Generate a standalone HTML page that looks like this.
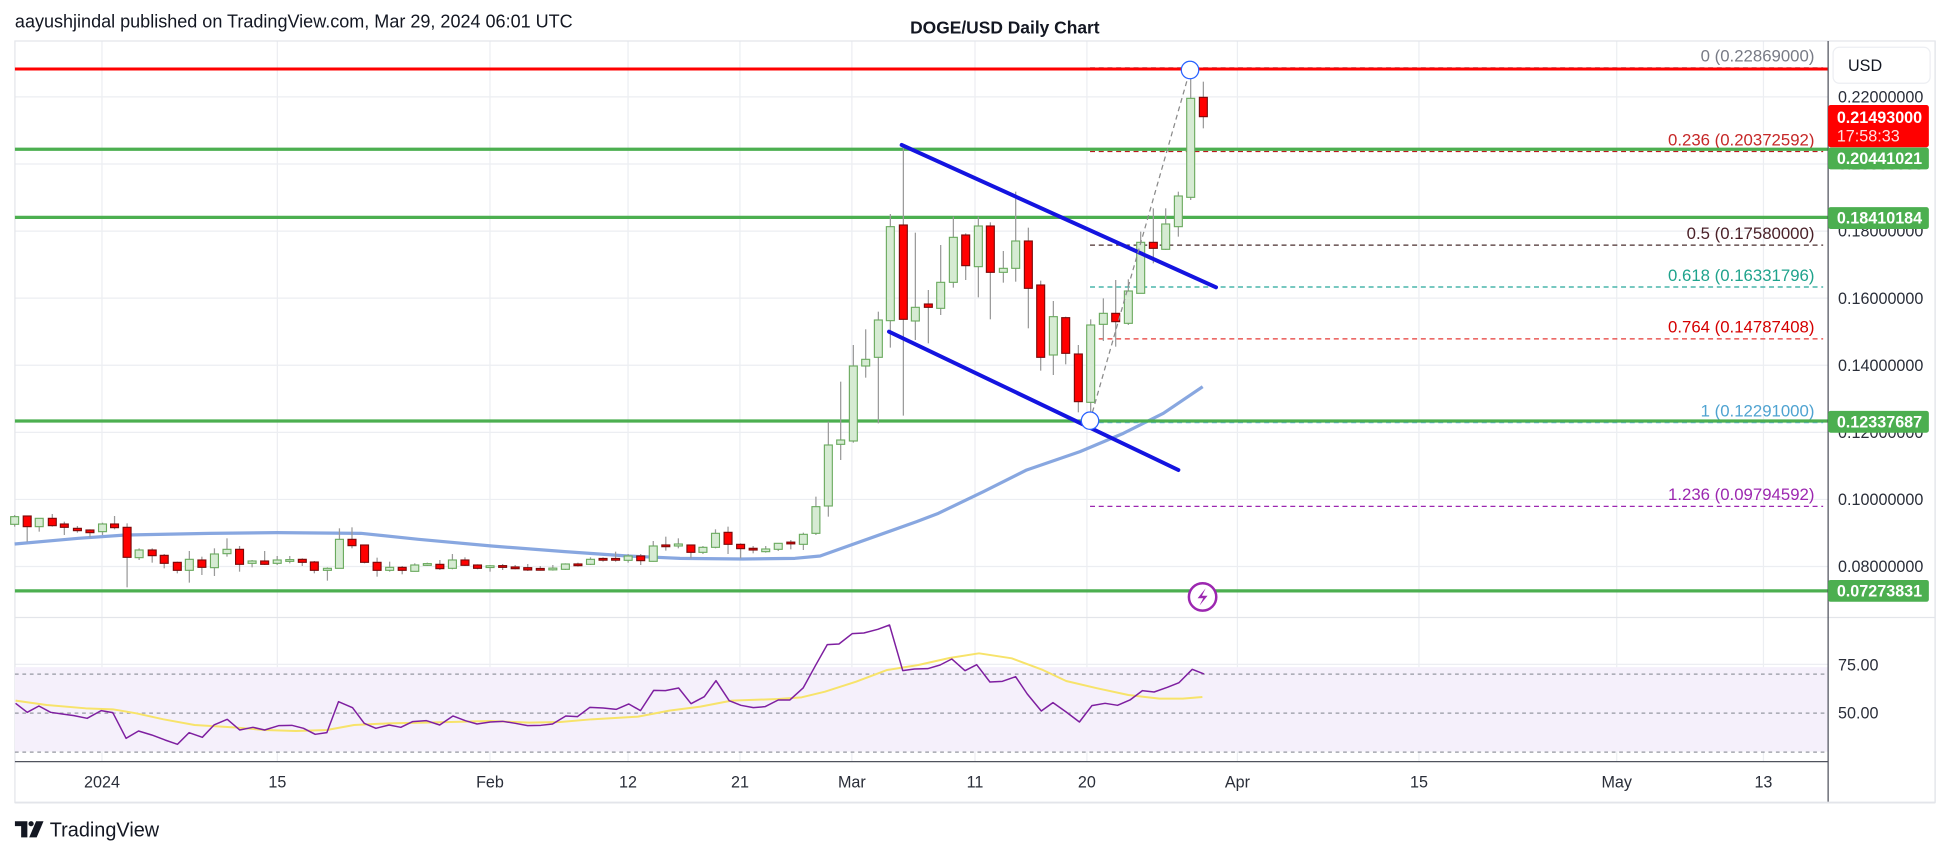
<!DOCTYPE html>
<html><head><meta charset="utf-8"><style>
html,body{margin:0;padding:0;background:#fff;width:1950px;height:856px;overflow:hidden}
svg{display:block}
text{font-family:"Liberation Sans","DejaVu Sans",sans-serif}
</style></head><body>
<svg id="s" width="1950" height="856" viewBox="0 0 1568 689" preserveAspectRatio="none" xmlns="http://www.w3.org/2000/svg">
<rect width="1568" height="689" fill="#fff"/>
<g id="grid"></g>
<rect x="12" y="537" width="1458" height="68" fill="#f5f0fb"/>
<g id="draw"></g>
<text x="12" y="22" font-size="14.5" fill="#131722">aayushjindal published on TradingView.com, Mar 29, 2024 06:01 UTC</text>
<text x="808" y="27" font-size="14" font-weight="bold" fill="#131722" text-anchor="middle">DOGE/USD Daily Chart</text>
</svg>
<script>
const NS="http://www.w3.org/2000/svg";
const G=document.getElementById('grid'),D=document.getElementById('draw');
function el(p,tag,a,txt){const e=document.createElementNS(NS,tag);for(const k in a)e.setAttribute(k,a[k]);if(txt!==undefined)e.textContent=txt;p.appendChild(e);return e;}
const py=p=>240-(p-0.16)*2700;
const z6x=z=>(790+z/3)/1.2436, z6y=z=>(50+z/3)/1.2424;
const z7x=z=>(z/1.912)/1.2436, z7y=z=>(480+z/3)/1.2424;
const z8x=z=>z/1.598, z8y=z=>(620+z/3)/1.2424;
// frame
const L=12,R=1470,T=33,B=613;
// vertical grid
[82,223,394,505,595,685,784,874,995,1141,1300,1418].forEach(x=>el(G,'line',{x1:x,y1:T,x2:x,y2:B,stroke:'#eceef2','stroke-width':1}));
[0.08,0.10,0.12,0.14,0.16,0.18,0.20,0.22].forEach(p=>el(G,'line',{x1:L,y1:py(p),x2:R,y2:py(p),stroke:'#eceef2','stroke-width':1}));
el(G,'line',{x1:L,y1:534.8,x2:R,y2:534.8,stroke:'#eceef2'});
// frame lines
el(G,'rect',{x:L,y:T,width:1544,height:613,fill:'none',stroke:'#e3e5ea','stroke-width':1});
el(G,'line',{x1:L,y1:497,x2:1556,y2:497,stroke:'#e3e5ea'});
// RSI band dashed
[542.6,574,605.4].forEach(y=>el(D,'line',{x1:L,y1:y,x2:R,y2:y,stroke:'#9598a1','stroke-width':1,'stroke-dasharray':'3 3'}));
// MA line
const ma7=[[28,192],[150,175],[240,165],[400,160],[530,158],[690,160],[800,178],[940,198],[1080,215],[1200,228],[1300,235],[1420,237],[1520,235],[1568,228]].map(p=>[z7x(p[0]),z7y(p[1])]);
const ma6=[[380,1415],[445,1390],[580,1325],[710,1260],[870,1205],[1000,1150],[1120,1090],[1238,1010]].map(p=>[z6x(p[0]),z6y(p[1])]);
el(D,'polyline',{points:ma7.concat(ma6).map(p=>p.join(',')).join(' '),fill:'none',stroke:'#7b9ddd','stroke-width':2.6,'stroke-linejoin':'round','stroke-opacity':0.9});
// fib lines
const fx=876.5;
const fib=[[0.22869,'#9598a1','0 (0.22869000)','#787b86'],[0.20372592,'#b71c1c','0.236 (0.20372592)','#c62828'],[0.1758,'#4a2f2f','0.5 (0.17580000)','#4a2028'],[0.16331796,'#26a69a','0.618 (0.16331796)','#1fa38c'],[0.14787408,'#e53935','0.764 (0.14787408)','#d50000'],[0.12291,'#64b5f6','1 (0.12291000)','#4fa3d1'],[0.09794592,'#9c27b0','1.236 (0.09794592)','#9c27b0']];
fib.forEach(f=>{const y=py(f[0]);el(D,'line',{x1:fx,y1:y,x2:R-4,y2:y,stroke:f[1],'stroke-width':1,'stroke-dasharray':'4 3'});el(D,'text',{x:1459,y:y-5,'font-size':13.5,fill:f[3],'text-anchor':'end'},f[2]);});
// horizontal lines
el(D,'line',{x1:L,y1:py(0.22869)+1,x2:R,y2:py(0.22869)+1,stroke:'#f00','stroke-width':2.4});
[0.20441021,0.18410184,0.12337687,0.07273831].forEach(p=>el(D,'line',{x1:L,y1:py(p),x2:R,y2:py(p),stroke:'#4caf50','stroke-width':2.6}));
// candles
function candle(x,c,t,b,h,l){
  if(b-t<1.4){const m=(t+b)/2;t=m-0.7;b=m+0.7;}
  el(D,'line',{x1:x,y1:h,x2:x,y2:l,stroke:'#9a9a9a','stroke-width':1});
  el(D,'rect',{x:x-3.2,y:t,width:6.4,height:b-t,fill:c=='g'?'#d6ebd3':'#ff0000',stroke:c=='g'?'#6aaa5e':'#7a0a0a','stroke-width':0.9});
}
const c7=[[28,'g',110,133,105,140],[52,'r',108,140,108,185],[75,'g',115,140,115,155],[100,'r',115,137,102,140],[123,'r',132,142,125,165],[148,'r',145,152,138,158],[172,'r',150,158,148,172],[196,'g',132,155,128,165],[219,'r',132,143,108,148],[243,'r',142,232,130,322],[266,'g',210,233,205,240],[291,'r',210,227,205,248],[314,'r',226,250,222,265],[339,'r',247,271,245,280],[362,'g',238,271,213,308],[386,'r',240,262,230,285],[410,'g',222,263,205,288],[434,'g',208,221,175,230],[458,'r',208,253,198,275],[482,'g',243,250,240,262],[506,'r',243,253,213,255],[530,'g',240,250,228,255],[554,'g',240,243,228,250],[578,'r',238,247,235,258],[601,'r',246,271,243,280],[626,'g',265,271,262,302],[649,'g',178,265,145,265],[673,'r',178,197,142,205],[697,'r',195,247,195,250],[721,'r',247,271,233,290],[745,'g',262,271,245,275],[769,'r',262,271,258,283],[793,'g',255,274,250,275],[817,'g',252,255,248,258],[841,'r',253,266,240,270],[865,'g',240,265,222,268],[889,'r',240,256,232,258],[913,'r',255,265,253,268],[937,'g',258,262,255,275],[961,'r',258,261,252,270],[985,'r',261,266,255,268],[1009,'r',263,270,252,273],[1033,'r',267,269,258,272],[1057,'g',266,268,255,272],[1081,'g',252,268,250,270],[1105,'r',252,257,248,260],[1129,'g',238,253,232,255],[1153,'r',237,239,232,245],[1177,'r',237,239,215,245],[1201,'g',228,241,222,248],[1225,'r',228,242,222,255],[1249,'g',198,244,183,245],[1273,'r',195,200,170,212],[1297,'g',192,198,175,205],[1321,'r',195,217,195,235],[1344,'g',202,217,198,222],[1368,'g',160,202,148,205],[1392,'r',157,193,140,222],[1416,'r',193,206,190,235],[1440,'r',206,209,198,220],[1464,'g',207,215,198,218],[1488,'g',190,208,190,213],[1512,'r',188,190,180,208],[1536,'g',163,193,158,210],[1560,'g',80,160,50,165]];
c7.forEach(c=>candle(z7x(c[0]),c[1],z7y(c[2]),z7y(c[3]),z7y(c[4]),z7y(c[5])));
const c6=[[115,'g',1185,1368,1115,1400],[152,'g',1170,1183,995,1230],[190,'g',948,1173,885,1178],[227,'g',928,948,838,983],[265,'g',810,922,785,1120],[301,'g',530,812,492,893],[340,'r',525,808,285,1097],[376,'g',772,813,548,870],[415,'r',762,772,720,880],[452,'g',697,775,585,795],[490,'g',562,697,500,713],[527,'r',555,647,550,690],[565,'g',528,650,500,742],[601,'r',528,667,517,808],[640,'g',655,667,603,698],[677,'g',573,655,425,695],[715,'r',573,715,533,835],[752,'r',705,922,692,962],[790,'g',800,915,753,975],[827,'r',803,910,800,943],[865,'r',912,1055,885,1087],[902,'g',825,1057,808,1085],[940,'g',790,823,745,873],[977,'r',790,815,690,890],[1015,'g',723,820,688,825],[1052,'g',577,730,545,730],[1090,'r',577,595,475,640],[1127,'g',522,598,475,600],[1165,'g',438,530,425,560],[1202,'g',145,442,60,450],[1240,'r',142,200,95,235]];
c6.forEach(c=>candle(z6x(c[0]),c[1],z6y(c[2]),z6y(c[3]),z6y(c[4]),z6y(c[5])));
// channel
el(D,'line',{x1:z6x(335),y1:z6y(285),x2:z6x(1278),y2:z6y(712),stroke:'#1414e0','stroke-width':3.2,'stroke-linecap':'round'});
el(D,'line',{x1:z6x(297),y1:z6y(845),x2:z6x(1165),y2:z6y(1260),stroke:'#1414e0','stroke-width':3.2,'stroke-linecap':'round'});
// fib trend dashed
el(D,'line',{x1:z6x(900),y1:z6y(1112),x2:z6x(1200),y2:z6y(60),stroke:'#8a8a8a','stroke-width':1,'stroke-dasharray':'4 3'});
[[1200,60],[900,1112]].forEach(p=>el(D,'circle',{cx:z6x(p[0]),cy:z6y(p[1]),r:7,fill:'#fff',stroke:'#2962ff','stroke-width':1}));
// lightning icon
el(D,'circle',{cx:967,cy:480.5,r:11,fill:'#fff',stroke:'#9c27b0','stroke-width':2});
el(D,'path',{d:'M969.5,473.5 L963,481.5 L967.5,481.5 L964.5,487.5 L971,479.5 L966.5,479.5 Z',fill:'#9c27b0'});
// RSI
const rsi=[[20,250],[35,277],[50,258],[65,277],[80,282],[95,287],[112,295],[130,272],[145,278],[162,355],[178,333],[195,345],[212,360],[228,373],[243,338],[260,352],[275,315],[292,298],[308,330],[325,322],[340,330],[358,317],[375,316],[390,325],[405,343],[420,338],[435,245],[453,263],[468,310],[483,325],[500,315],[515,322],[530,305],[548,302],[565,315],[582,288],[598,302],[613,312],[630,306],[646,304],[662,310],[678,317],[695,316],[710,312],[727,288],[742,290],[758,262],[775,264],[792,268],[808,252],[823,272],[840,211],[855,212],[872,204],[888,251],[905,230],[920,182],[937,242],[952,256],[968,263],[983,260],[1000,240],[1015,240],[1032,204],[1048,136],[1063,74],[1078,72],[1095,41],[1110,39],[1128,28],[1143,15],[1160,152],[1175,147],[1192,146],[1208,135],[1223,117],[1240,152],[1255,134],[1272,186],[1288,184],[1305,170],[1320,222],[1338,273],[1353,248],[1370,276],[1387,306],[1403,257],[1420,250],[1436,256],[1452,240],[1468,212],[1483,216],[1500,202],[1515,188],[1532,148],[1547,162]];
const rma=[[20,242],[60,255],[110,265],[145,268],[175,280],[210,298],[250,315],[300,322],[340,330],[380,333],[420,330],[455,315],[500,310],[560,307],[630,303],[680,308],[720,306],[760,298],[820,290],[860,272],[900,260],[940,242],[1000,237],[1030,232],[1060,215],[1100,185],[1140,150],[1180,135],[1220,114],[1258,100],[1300,115],[1340,150],[1370,183],[1410,205],[1450,225],[1490,236],[1520,236],[1545,231]];
el(D,'polyline',{points:rma.map(p=>z8x(p[0])+','+z8y(p[1])).join(' '),fill:'none',stroke:'#f7e36a','stroke-width':1.6,'stroke-linejoin':'round'});
el(D,'polyline',{points:rsi.map(p=>z8x(p[0])+','+z8y(p[1])).join(' '),fill:'none',stroke:'#7e1fa0','stroke-width':1.2,'stroke-linejoin':'round'});
// axis separators
el(D,'line',{x1:R,y1:T,x2:R,y2:646,stroke:'#50535e','stroke-width':1});
el(D,'line',{x1:L,y1:B,x2:R,y2:B,stroke:'#50535e','stroke-width':1});
el(D,'line',{x1:1556,y1:T,x2:1556,y2:646,stroke:'#e3e5ea'});
el(D,'line',{x1:L,y1:646,x2:1556,y2:646,stroke:'#e3e5ea','stroke-width':1.5});
// price labels
[[0.22,'0.22000000'],[0.20,'0.20000000'],[0.18,'0.18000000'],[0.16,'0.16000000'],[0.14,'0.14000000'],[0.12,'0.12000000'],[0.10,'0.10000000'],[0.08,'0.08000000']].forEach(p=>el(D,'text',{x:1478,y:py(p[0])+4.5,'font-size':13,fill:'#2a2e39'},p[1]));
el(D,'text',{x:1478,y:539.5,'font-size':13,fill:'#2a2e39'},'75.00');
el(D,'text',{x:1478,y:578.5,'font-size':13,fill:'#2a2e39'},'50.00');
// USD box
el(D,'rect',{x:1474,y:38,width:78,height:29,rx:5,fill:'#fff',stroke:'#eceef2'});
el(D,'text',{x:1486,y:57,'font-size':13,fill:'#131722'},'USD');
// tags
el(D,'rect',{x:1470,y:84.5,width:81,height:34,rx:2,fill:'#ff0000'});
el(D,'text',{x:1477,y:99,'font-size':13,'font-weight':'bold',fill:'#fff'},'0.21493000');
el(D,'text',{x:1477,y:114,'font-size':13,fill:'#ffe0e0'},'17:58:33');
function gtag(y,t){el(D,'rect',{x:1470,y:y-8.8,width:81,height:17.6,rx:2,fill:'#4caf50'});el(D,'text',{x:1477,y:y+4.6,'font-size':13,'font-weight':'bold',fill:'#fff'},t);}
gtag(127.5,'0.20441021');gtag(175.5,'0.18410184');gtag(339.5,'0.12337687');gtag(475.6,'0.07273831');
// time labels
[[82,'2024'],[223,'15'],[394,'Feb'],[505,'12'],[595,'21'],[685,'Mar'],[784,'11'],[874,'20'],[995,'Apr'],[1141,'15'],[1300,'May'],[1418,'13']].forEach(p=>el(D,'text',{x:p[0],y:634,'font-size':13,fill:'#2a2e39','text-anchor':'middle'},p[1]));
// logo
el(D,'path',{d:'M12,661 H22 V674 H17 V665 H12 Z',fill:'#131722'});
el(D,'circle',{cx:25,cy:663,r:2.1,fill:'#131722'});
el(D,'path',{d:'M29,661 H35 L29.5,674 H23.5 Z',fill:'#131722'});
el(D,'text',{x:40,y:673.5,'font-size':16,fill:'#131722'},'TradingView');
</script>
</body></html>
